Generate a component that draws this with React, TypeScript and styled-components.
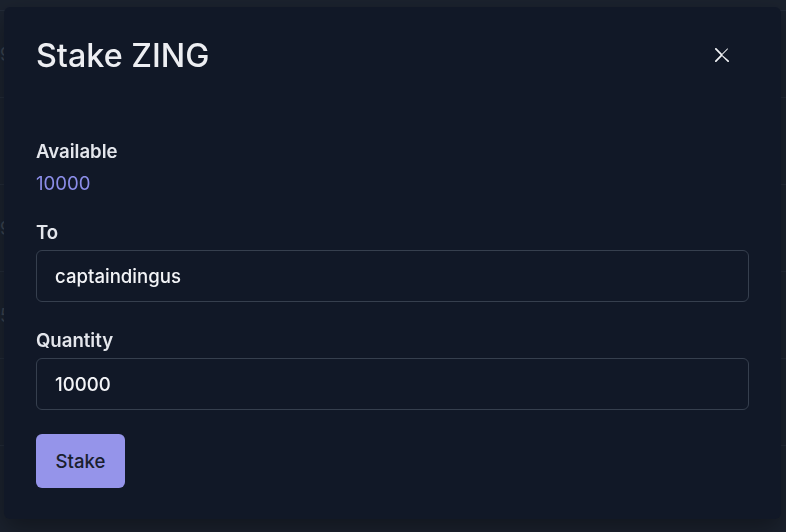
import React from "react";
import styled, { createGlobalStyle } from "styled-components";

const GlobalStyle = createGlobalStyle`
  html, body {
    margin: 0;
    padding: 0;
    background: #1b222e;
    font-family: Inter, "Noto Sans", "Liberation Sans", sans-serif;
    overflow: hidden;
  }
  * { box-sizing: border-box; }
`;

const Page = styled.div`
  width: 786px;
  height: 532px;
  overflow: hidden;
  padding-top: 10px;
  display: flex;
  flex-direction: column;
  background: #1b222e;
`;

const BgRow = styled.div`
  height: 87px;
  flex: none;
  border-top: 1px solid #232b38;
  display: flex;
  align-items: center;
  color: #3a4350;
  font-size: 18px;
`;

const BgCell = styled.span`
  padding-left: 0;
`;

const Modal = styled.section`
  position: fixed;
  top: 7px;
  left: 4px;
  width: 777px;
  height: 512px;
  background: #111827;
  border-radius: 6px;
  padding: 29px 32px 32px;
  box-shadow: 0 10px 25px rgba(0, 0, 0, 0.35);
  display: flex;
  flex-direction: column;
`;

const Header = styled.header`
  display: flex;
  align-items: center;
`;

const Title = styled.h2`
  margin: 0;
  font-size: 32.3px;
  line-height: 40px;
  font-weight: 500;
  color: #edeef2;
`;

const CloseButton = styled.button`
  position: absolute;
  top: 32px;
  right: 43px;
  width: 32px;
  height: 32px;
  border: none;
  background: transparent;
  border-radius: 6px;
  display: flex;
  align-items: center;
  justify-content: center;
  padding: 0;
  cursor: pointer;
  color: #f1f2f5;
`;

const Body = styled.div`
  padding-top: 63px;
  display: flex;
  flex-direction: column;
`;

const Label = styled.div<{ $mb?: number }>`
  font-size: 18.6px;
  line-height: 24px;
  font-weight: 600;
  color: #e4e6ec;
  margin-bottom: ${(p) => p.$mb ?? 6}px;
`;

const Balance = styled.div`
  font-size: 18.6px;
  line-height: 24px;
  color: #8b8de8;
  margin-bottom: 25px;
`;

const Field = styled.div`
  display: flex;
  flex-direction: column;
  margin-bottom: 26px;
`;

const Input = styled.input`
  height: 52px;
  width: 100%;
  border: 1px solid #363f4e;
  border-radius: 6px;
  background: transparent;
  padding: 0 18px;
  font-family: inherit;
  font-size: 18.6px;
  font-weight: 500;
  color: #f3f4f7;
  outline: none;
`;

const Actions = styled.div`
  display: flex;
  margin-top: -2px;
`;

const StakeButton = styled.button`
  height: 54px;
  width: 89px;
  padding: 0;
  border: none;
  border-radius: 6px;
  background: #9594ea;
  color: #1a1f2e;
  font-family: inherit;
  font-size: 18.6px;
  font-weight: 500;
  cursor: pointer;
`;

const CloseIcon = () => (
  <svg width="14" height="14" viewBox="0 0 24 24" aria-hidden="true">
    <path
      fill="currentColor"
      d="M.439,21.44a1.5,1.5,0,0,0,2.122,2.121L11.823,14.3a.25.25,0,0,1,.354,0l9.262,9.263a1.5,1.5,0,1,0,2.122-2.121L12.3,12.177a.25.25,0,0,1,0-.354l9.263-9.262A1.5,1.5,0,0,0,21.439.44L12.177,9.7a.25.25,0,0,1-.354,0L2.561.44A1.5,1.5,0,0,0,.439,2.561L9.7,11.823a.25.25,0,0,1,0,.354Z"
    />
  </svg>
);

const bgRows = ["9", "", "9", "5", "", ""];

export default function App() {
  return (
    <>
      <GlobalStyle />
      <Page>
        {bgRows.map((t, i) => (
          <BgRow key={i}>
            <BgCell>{t}</BgCell>
          </BgRow>
        ))}
      </Page>
      <Modal role="dialog" aria-label="Stake ZING">
        <Header>
          <Title>Stake ZING</Title>
        </Header>
        <CloseButton aria-label="Close">
          <CloseIcon />
        </CloseButton>
        <Body>
          <Label $mb={8}>Available</Label>
          <Balance>10000</Balance>
          <Field>
            <Label>To</Label>
            <Input defaultValue="captaindingus" />
          </Field>
          <Field>
            <Label>Quantity</Label>
            <Input defaultValue="10000" />
          </Field>
          <Actions>
            <StakeButton>Stake</StakeButton>
          </Actions>
        </Body>
      </Modal>
    </>
  );
}
